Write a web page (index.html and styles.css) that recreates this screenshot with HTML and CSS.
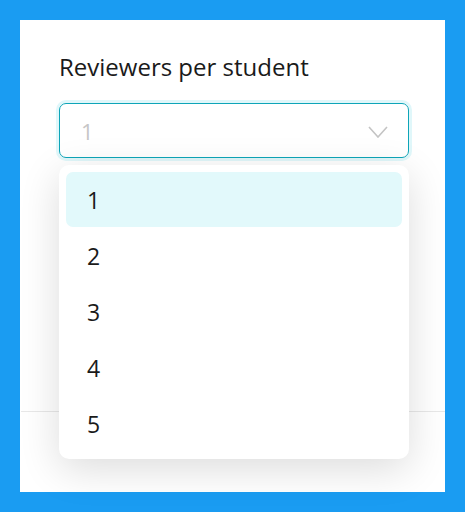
FILE: index.html
```html
<!DOCTYPE html>
<html lang="en">
  <head>
    <meta charset="UTF-8" />
    <meta name="viewport" content="width=device-width, initial-scale=1.0" />
    <title>Reviewers</title>
    <link rel="stylesheet" href="styles.css">
  </head>
  <body>
    <div class="card">
      <div class="card-body">
        <p class="field-label">Reviewers per student</p>
        <div class="select-wrap">
          <div class="select">
            <span class="select-value">1</span>
            <svg class="chevron" width="20" height="12" viewBox="0 0 20 12">
              <path d="M1 1 L10 11 L19 1" fill="none" stroke="#c4c4c4" stroke-width="1.6" />
            </svg>
          </div>
          <ul class="menu">
            <li class="menu-item active">1</li>
            <li class="menu-item">2</li>
            <li class="menu-item">3</li>
            <li class="menu-item">4</li>
            <li class="menu-item">5</li>
          </ul>
        </div>
      </div>
      <div class="card-footer"></div>
    </div>
  </body>
</html>
```

FILE: styles.css
```css
body {
  margin: 0;
  background-color: #1a9cf2;
  font-family: "Open Sans", "Noto Sans", sans-serif;
  color: #1a1a1a;
}
.card {
  margin: 20px;
  height: 472px;
  background-color: white;
  display: flex;
  flex-direction: column;
}
.card-body {
  flex: 1;
  padding: 33px 36px 0 39px;
  border-bottom: 1px solid #e8e8e8;
  margin-left: 1px;
}
.card-body .field-label {
  margin-left: -1px;
}
.field-label {
  margin: 0 0 22px 0;
  font-size: 24px;
  line-height: 28px;
}
.select-wrap {
  position: relative;
  margin-left: -1px;
}
.select {
  height: 53px;
  border: 1px solid #0ea5b8;
  border-radius: 7px;
  box-shadow: 0 0 0 3px #e0f7fa;
  display: flex;
  align-items: center;
  justify-content: space-between;
  padding: 0 20px 0 21px;
}
.select-value {
  font-size: 22px;
  color: #c6c6c6;
}
.chevron {
  margin-top: 2px;
}
.menu {
  position: absolute;
  top: 62px;
  left: 0;
  right: 0;
  margin: 0;
  padding: 7px;
  list-style: none;
  background-color: white;
  border-radius: 10px;
  box-shadow: 0 10px 40px rgba(0, 0, 0, 0.14);
}
.menu-item {
  height: 56px;
  display: flex;
  align-items: center;
  padding-left: 21px;
  font-size: 23px;
  border-radius: 7px;
}
.menu-item.active {
  height: 55px;
  margin-bottom: 1px;
  background-color: #e2f9fb;
}
.card-footer {
  height: 80px;
}
```
